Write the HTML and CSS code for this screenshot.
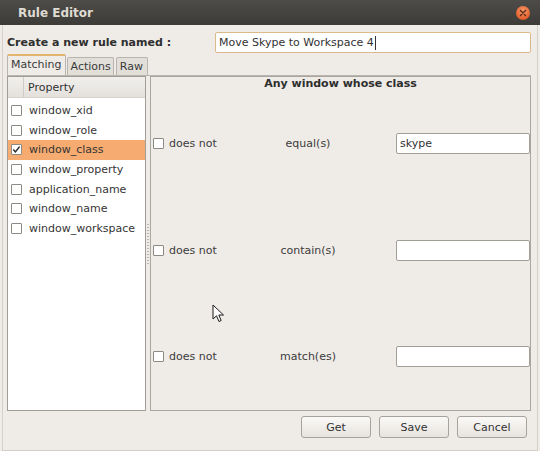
FILE: index.html
```html
<!DOCTYPE html>
<html>
<head>
<meta charset="utf-8">
<link rel="stylesheet" href="styles.css">
</head>
<body>
<div class="window">
  <div class="titlebar">
    <span class="title">Rule Editor</span>
    <span class="close"><svg width="14" height="14" viewBox="0 0 14 14"><path d="M4.5 4.5 L9.5 9.5 M9.5 4.5 L4.5 9.5" stroke="#5a2a16" stroke-width="1.4" stroke-linecap="round"/></svg></span>
  </div>
  <div class="inner">
    <div class="name-row">
      <span class="name-label">Create a new rule named :</span>
      <div class="entry focus">Move Skype to Workspace 4<span class="caret"></span></div>
    </div>
    <div class="tabs">
      <div class="tab active">Matching</div>
      <div class="tab">Actions</div>
      <div class="tab">Raw</div>
    </div>
    <div class="page">
      <div class="list">
        <div class="list-header"><div class="hcol1"></div><div class="hcol2">Property</div></div>
        <div class="rows">
          <div class="row"><span class="cb"></span><span>window_xid</span></div>
          <div class="row"><span class="cb"></span><span>window_role</span></div>
          <div class="row selected"><span class="cb checked"><svg width="11" height="11" viewBox="0 0 11 11"><path d="M2.3 5.6 L4.4 7.9 L8.6 2.6" fill="none" stroke="#2a2a2a" stroke-width="1.5"/></svg></span><span>window_class</span></div>
          <div class="row"><span class="cb"></span><span>window_property</span></div>
          <div class="row"><span class="cb"></span><span>application_name</span></div>
          <div class="row"><span class="cb"></span><span>window_name</span></div>
          <div class="row"><span class="cb"></span><span>window_workspace</span></div>
        </div>
      </div>
      <div class="splitter"><span class="grip"></span></div>
      <div class="panel">
        <div class="panel-title">Any window whose class</div>
        <div class="rules">
          <div class="rule">
            <div class="neg"><span class="cb"></span><span>does not</span></div>
            <div class="op">equal(s)</div>
            <div class="spacer"></div>
            <div class="entry small">skype</div>
          </div>
          <div class="rule">
            <div class="neg"><span class="cb"></span><span>does not</span></div>
            <div class="op">contain(s)</div>
            <div class="spacer"></div>
            <div class="entry small"></div>
          </div>
          <div class="rule">
            <div class="neg"><span class="cb"></span><span>does not</span></div>
            <div class="op">match(es)</div>
            <div class="spacer"></div>
            <div class="entry small"></div>
          </div>
        </div>
      </div>
    </div>
    <div class="buttons">
      <div class="btn">Get</div>
      <div class="btn">Save</div>
      <div class="btn">Cancel</div>
    </div>
  </div>
  <svg class="cursor" width="14" height="20" viewBox="0 0 14 20"><path d="M1 1 L1 15 L4.5 11.8 L7 17.5 L9.2 16.5 L6.8 11 L11.5 11 Z" fill="#ffffff" stroke="#1a1a1a" stroke-width="1" stroke-linejoin="round"/></svg>
</div>
</body>
</html>
```
FILE: styles.css
```css
* { box-sizing: border-box; }
html, body { margin: 0; padding: 0; }
body {
  width: 540px;
  height: 451px;
  overflow: hidden;
  font-family: "DejaVu Sans", sans-serif;
  font-size: 11px;
  color: #3c3c3c;
}
.window {
  position: relative;
  width: 540px;
  height: 451px;
  display: flex;
  flex-direction: column;
  background: #efebe7;
}
.titlebar {
  flex: none;
  height: 25px;
  display: flex;
  align-items: center;
  padding: 0 10px 0 18px;
  background: linear-gradient(#4d4c48, #3c3b37);
}
.title {
  color: #dfdbd2;
  font-weight: bold;
  font-size: 12px;
}
.close {
  margin-left: auto;
  width: 14px;
  height: 14px;
  border-radius: 50%;
  background: radial-gradient(circle at 50% 35%, #f59a6a, #e2602c 70%, #b8471e);
  display: flex;
}
.inner {
  flex: 1;
  display: flex;
  flex-direction: column;
  margin: 0 2px;
  border: 1px solid #d5d0c9;
  border-top: none;
  padding: 7px 6px 12px 4px;
}
.name-row {
  height: 21px;
  display: flex;
  align-items: center;
}
.name-label {
  font-weight: bold;
  color: #2e2e2e;
}
.entry {
  background: #ffffff;
  border: 1px solid #a29e98;
  border-radius: 2px;
  height: 21px;
  display: flex;
  align-items: center;
  padding-left: 3px;
  color: #333;
}
.entry.focus {
  width: 316px;
  margin-left: auto;
  border-color: #dcb98c;
}
.caret {
  width: 1px;
  height: 14px;
  background: #333;
  margin-left: 1px;
}
.tabs {
  height: 22px;
  display: flex;
  align-items: flex-end;
  gap: 1px;
}
.tab {
  height: 18px;
  padding: 0 2px 0 2px;
  line-height: 17px;
  border: 1px solid #b9b4ad;
  border-bottom: none;
  border-radius: 2px 2px 0 0;
  background: #e2ded8;
  color: #3a3a3a;
}
.tab:nth-child(2) { padding: 0 2px 0 3px; }
.tab:nth-child(3) { padding: 0 4px 0 3px; margin-left: 1px; }
.tab.active {
  height: 21px;
  padding: 0 3px;
  line-height: 18px;
  background: #efebe7;
  border-top: 2px solid #e2b46e;
}
.page {
  flex: 1;
  display: flex;
  min-height: 0;
  border-top: 1px solid #b9b4ad;
}
.list {
  width: 139px;
  background: #ffffff;
  border: 1px solid #a09c96;
  display: flex;
  flex-direction: column;
}
.list-header {
  height: 21px;
  display: flex;
  background: linear-gradient(#f1efec, #e4e1dd);
  border-bottom: 1px solid #d6d2cc;
}
.hcol1 {
  width: 16px;
  border-right: 1px solid #cfcbc5;
}
.hcol2 {
  padding-left: 4px;
  line-height: 21px;
  color: #333;
}
.rows {
  padding-top: 3px;
}
.row {
  height: 19.6px;
  display: flex;
  align-items: center;
  gap: 7px;
  padding-left: 3px;
  color: #353535;
}
.row.selected {
  background: #f6ab70;
}
.cb {
  width: 11px;
  height: 11px;
  flex: none;
  border: 1px solid #8d8983;
  border-radius: 1px;
  background: #ffffff;
  display: flex;
}
.cb.checked svg { margin: -1px; }
.splitter {
  width: 4px;
  display: flex;
  align-items: center;
  justify-content: center;
}
.grip {
  width: 2px;
  height: 40px;
  background: repeating-linear-gradient(#b9b4ad 0 1px, transparent 1px 3px);
}
.panel {
  flex: 1;
  border: 1px solid #a9a59f;
  display: flex;
  flex-direction: column;
}
.panel-title {
  height: 13px;
  line-height: 14px;
  text-align: center;
  font-weight: bold;
  color: #2e2e2e;
}
.rules {
  flex: 1;
  display: flex;
  flex-direction: column;
  padding-left: 2px;
}
.rule {
  flex: 1;
  display: grid;
  grid-template-columns: 100px 110px 33px 134px;
  align-items: center;
}
.neg {
  display: flex;
  align-items: center;
  gap: 5px;
}
.op {
  text-align: center;
}
.entry.small {
  height: 21px;
}
.buttons {
  margin-top: 5px;
  display: flex;
  justify-content: flex-end;
  gap: 8px;
  padding-right: 4px;
}
.btn {
  width: 70px;
  height: 22px;
  border: 1px solid #a7a29b;
  border-radius: 3px;
  background: linear-gradient(#faf9f7, #e7e3de);
  display: flex;
  align-items: center;
  justify-content: center;
  color: #333;
}
.cursor {
  position: absolute;
  left: 212px;
  top: 304px;
}
```
